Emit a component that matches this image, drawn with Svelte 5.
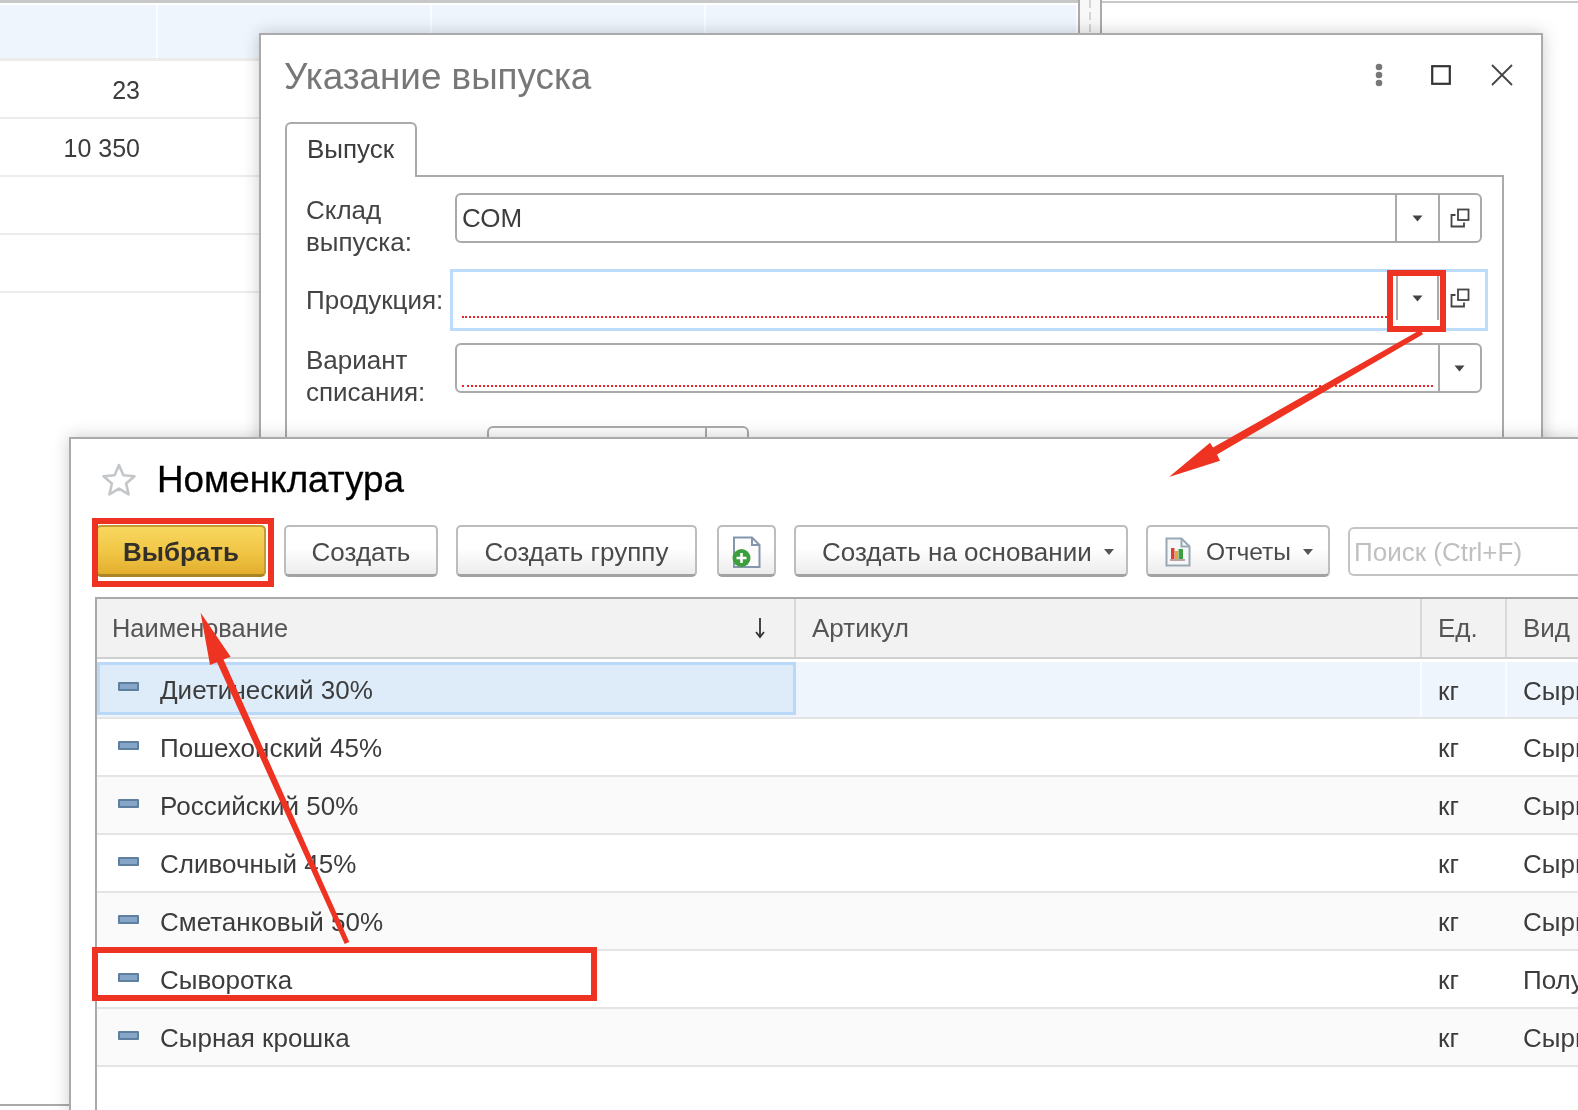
<script>
	const bgRows = ['', '23', '10 350', '', ''];

	const items = [
		{ name: 'Диетический 30%', kind: 'Сырье' },
		{ name: 'Пошехонский 45%', kind: 'Сырье' },
		{ name: 'Российский 50%', kind: 'Сырье' },
		{ name: 'Сливочный 45%', kind: 'Сырье' },
		{ name: 'Сметанковый 50%', kind: 'Сырье' },
		{ name: 'Сыворотка', kind: 'Полуфабрикат' },
		{ name: 'Сырная крошка', kind: 'Сырье' }
	];
</script>

{#snippet caret()}
	<svg class="caret" width="11" height="7" viewBox="0 0 11 7"><path d="M0.500 0.500h10L5.500 6.500z" fill="#444" /></svg>
{/snippet}

{#snippet copy()}
	<svg width="20" height="20" viewBox="0 0 20 20" fill="none" stroke="#444" stroke-width="1.800">
		<rect x="8" y="1.500" width="10.500" height="10.500" />
		<path d="M5.500 7H1.500v11.500h12.500V14.500" />
	</svg>
{/snippet}

<div class="page">
	<div class="bg-left">
		{#each bgRows as val, i}
			<div class="bg-row" class:current={i === 0}>
				<div class="bg-cell num">{val}</div>
				<div class="bg-cell"></div>
				<div class="bg-cell"></div>
				<div class="bg-cell"></div>
			</div>
		{/each}
	</div>
	<div class="splitter"><i></i></div>
	<div class="bg-right"></div>
	<div class="bg-bottom"></div>

	<section class="win dialog">
		<header class="d-head">
			<h2>Указание выпуска</h2>
			<div class="d-tools">
				<svg class="dots" width="12" height="24" viewBox="0 0 12 24"><g fill="#777"><circle cx="6" cy="4" r="3.300" /><circle cx="6" cy="12" r="3.300" /><circle cx="6" cy="20" r="3.300" /></g></svg>
				<svg width="20" height="20" viewBox="0 0 20 20"><rect x="1.200" y="1.200" width="17.600" height="17.600" fill="none" stroke="#333" stroke-width="2.200" /></svg>
				<svg width="22" height="22" viewBox="0 0 22 22"><path d="M1 1l20 20M21 1L1 21" stroke="#444" stroke-width="1.800" fill="none" /></svg>
			</div>
		</header>
		<div class="tabs"><div class="tab">Выпуск</div></div>
		<div class="panel">
			<div class="row">
				<label>Склад<br />выпуска:</label>
				<div class="field">
					<div class="val">СОМ</div>
					<div class="btn">{@render caret()}</div>
					<div class="btn">{@render copy()}</div>
				</div>
			</div>
			<div class="row second">
				<label>Продукция:</label>
				<div class="field focus">
					<div class="val empty"></div>
					<div class="btn sep">{@render caret()}</div>
					<div class="btn plain">{@render copy()}</div>
				</div>
			</div>
			<div class="row third">
				<label>Вариант<br />списания:</label>
				<div class="field">
					<div class="val empty"></div>
					<div class="btn">{@render caret()}</div>
				</div>
			</div>
			<div class="fragment"><div class="frag-btn"></div></div>
		</div>
	</section>

	<section class="win catalog">
		<header class="c-head">
			<svg width="36" height="36" viewBox="0 0 36 36"><path d="M18 3l4.400 10.200 11.100 1-8.400 7.300 2.500 10.900L18 26.600 8.400 32.400l2.500-10.900L2.500 14.200l11.100-1z" fill="none" stroke="#c4c7ca" stroke-width="2.600" stroke-linejoin="round" /></svg>
			<h1>Номенклатура</h1>
		</header>
		<div class="toolbar">
			<button class="primary">Выбрать</button>
			<button class="w-create">Создать</button>
			<button class="w-group">Создать группу</button>
			<button class="w-icon">
				<svg width="32" height="36" viewBox="0 0 32 36">
					<path d="M3 4.500h18l7.500 7.500v22H3z" fill="#fcfcfd" stroke="#8496ab" stroke-width="2" />
					<path d="M21 4.500V12h7.500" fill="none" stroke="#8496ab" stroke-width="2" />
					<circle cx="10.500" cy="25" r="9" fill="#3d9e3d" />
					<path d="M10.500 20v10M5.500 25h10" stroke="#fff" stroke-width="2.600" />
				</svg>
			</button>
			<button class="w-base">Создать на основании<span class="tri"></span></button>
			<button class="w-rep">
				<svg width="26" height="30" viewBox="0 0 26 30">
					<path d="M1.500 1.500h15l8 8v19h-23z" fill="#f4f6f8" stroke="#9aa7b5" stroke-width="2" />
					<path d="M16.500 1.500v8h8" fill="none" stroke="#9aa7b5" stroke-width="2" />
					<rect x="6" y="11" width="3.500" height="11" fill="#d9402e" />
					<rect x="10" y="14" width="3" height="8" fill="#e8a33a" />
					<rect x="13.500" y="12" width="4.500" height="10" fill="#3f9e3f" />
					<path d="M5 23h15" stroke="#a88" stroke-width="1.500" />
				</svg>
				Отчеты<span class="tri"></span>
			</button>
			<div class="search">Поиск (Ctrl+F)</div>
		</div>
		<div class="table">
			<div class="t-row t-head">
				<div class="t-cell name-h">Наименование<span class="sort">
					<svg width="12" height="22" viewBox="0 0 12 22"><path d="M6 1v19M2 15l4 5 4-5" fill="none" stroke="#333" stroke-width="1.800" /></svg>
				</span></div>
				<div class="t-cell">Артикул</div>
				<div class="t-cell">Ед.</div>
				<div class="t-cell">Вид</div>
			</div>
			{#each items as item, i}
				<div class="t-row" class:active={i === 0} class:odd={i % 2 === 0 && i > 0}>
					<div class="t-cell first-col"><span class="dash"></span>{item.name}</div>
					<div class="t-cell"></div>
					<div class="t-cell">кг</div>
					<div class="t-cell">{item.kind}</div>
				</div>
			{/each}
		</div>
	</section>

	<!-- red marks drawn over the screenshot -->
	<div class="mark m-drop"></div>
	<div class="mark m-pick"></div>
	<div class="mark m-row"></div>
	<svg class="arrows" width="1578" height="1110" viewBox="0 0 1578 1110">
		<g fill="#ee3322">
			<path d="M1420.500 329.800L1213 447.500 1210 442.700 1169 477 1220 460.700 1217 454.500 1423 334.200z" />
			<path d="M344.700 944L217 662.300 210 665 200.600 612.700 230.600 656.700 223.500 659.500 349.300 942z" />
		</g>
	</svg>
</div>

<style>
	:global(body) { margin: 0; background: #fff; }

	.page {
		position: relative;
		width: 1578px;
		height: 1110px;
		overflow: hidden;
		background: #fff;
		font-family: "Liberation Sans", Arial, sans-serif;
		font-size: 26px;
		color: #3c3c3c;
		filter: blur(.45px);
	}

	/* table behind the windows */
	.bg-left {
		position: absolute;
		left: 0; top: 0;
		width: 1078px;
		border-top: 3px solid #c8c8c8;
		padding-top: 2px;
	}
	.bg-row {
		display: grid;
		grid-template-columns: 158px 274px 274px 1fr;
		height: 56px;
		border-bottom: 2px solid #ececec;
	}
	.bg-row.current { height: 53px; background: #eef5fd; border-bottom-width: 3px; }
	.bg-cell { padding-right: 18px; line-height: 58px; font-size: 25px; }
	.current .bg-cell { border-right: 2px solid #fafcff; }
	.num { text-align: right; }
	.splitter {
		position: absolute;
		left: 1078px; top: 0;
		width: 20px; height: 34px;
		border: solid #aaa;
		border-width: 0 2px;
		background: #f8f8f8;
	}
	.splitter i {
		display: block;
		width: 2px; height: 34px;
		margin-left: 9px;
		background: repeating-linear-gradient(#d4d4d4 0 8px, transparent 8px 12px);
	}
	.bg-right {
		position: absolute;
		left: 1102px; right: 0; top: 1px;
		border-top: 2px solid #c8c8c8;
	}
	.bg-bottom {
		position: absolute;
		left: 0; top: 1104px;
		width: 70px;
		border-top: 2px solid #aaa;
	}

	/* windows */
	.win {
		position: absolute;
		background: #fff;
		border: 2px solid #aaa;
		box-sizing: border-box;
		box-shadow: 0 0 16px rgba(0, 0, 0, .2);
	}
	.dialog { left: 259px; top: 33px; width: 1284px; height: 430px; }
	.catalog { left: 69px; top: 437px; right: -4px; bottom: -4px; }

	.d-head {
		display: flex;
		align-items: center;
		justify-content: space-between;
		height: 87px;
		padding-left: 23px;
	}
	h2 { margin: 0 0 4px; font-size: 36.800px; font-weight: 400; color: #777; }
	.d-tools { display: flex; align-items: center; gap: 40px; padding-right: 28px; margin-top: -7px; }
	.dots { margin-right: 6px; }

	.tabs { margin-left: 24px; display: flex; }
	.tab {
		width: 132px;
		height: 55px;
		box-sizing: border-box;
		border: 2px solid #aaa;
		border-bottom: 0;
		border-radius: 6px 6px 0 0;
		background: #fff;
		padding-left: 20px;
		line-height: 50px;
		margin-bottom: -2px;
		position: relative;
	}
	.panel {
		margin: 0 37px 0 24px;
		border: 2px solid #aaa;
		border-bottom: 0;
		padding: 16px 20px 0 19px;
		height: 400px;
	}

	.row { display: grid; grid-template-columns: 149px 1fr; align-items: start; line-height: 32px; }
	.row.second { margin-top: 11px; align-items: center; }
	.row.third { margin-top: 12px; }
	label { white-space: nowrap; color: #444; padding-top: 1px; }
	.second label { padding-top: 0; }
	.field {
		display: flex;
		height: 50px;
		box-sizing: border-box;
		border: 2px solid #aaa;
		border-radius: 6px;
	}
	.val { flex: 1; padding-left: 5px; line-height: 46px; }
	.val.empty { margin: 0 5px 4px; padding: 0; border-bottom: 2px dotted #e8262a; }
	.btn {
		box-sizing: border-box;
		width: 42.500px;
		border-left: 2px solid #aaa;
		display: flex;
		align-items: center;
		justify-content: center;
	}
	.field.focus {
		height: 62px;
		margin: 0 -6px 0 -5px;
		border: 3px solid #bddcfb;
		border-radius: 0;
		padding: 4px 5px 8px;
	}
	.field.focus .val.empty { margin-left: 4px; margin-bottom: 2px; }
	.btn.sep { border-right: 2px solid #aaa; width: 43px; }
	.btn.plain { border-left: 0; width: 41px; }
	.fragment {
		margin: 18px 0 0 181px;
		width: 262px;
		height: 40px;
		box-sizing: border-box;
		border: 2px solid #aaa;
		border-radius: 6px;
		display: flex;
		justify-content: flex-end;
	}
	.frag-btn { width: 40px; border-left: 2px solid #aaa; }

	.c-head { display: flex; align-items: center; height: 86px; padding: 0 0 5px 30px; box-sizing: border-box; gap: 20px; }
	h1 { margin: 0; font-size: 36.800px; font-weight: 400; color: #000; -webkit-text-stroke: .3px #000; }

	.toolbar { display: flex; gap: 18px; margin-left: 25px; height: 52px; align-items: stretch; }
	button {
		font: inherit;
		color: #4a4a4a;
		height: 52px;
		box-sizing: border-box;
		border: 2px solid #bdbdbd;
		border-bottom: 3px solid #a2a2a2;
		border-radius: 5px;
		background: linear-gradient(#fff, #fff 45%, #ececec);
		padding: 3px 0 0;
		display: flex;
		align-items: center;
		justify-content: center;
		white-space: nowrap;
	}
	.primary {
		width: 170px;
		background: linear-gradient(#f8d85f, #f0c545 55%, #e3ae2e);
		border-color: #c09a33;
		border-bottom-color: #a98526;
		color: #33302a;
		font-weight: 700;
	}
	.w-create { width: 154px; }
	.w-group { width: 241px; }
	.w-icon { width: 59px; margin-left: 2px; padding-top: 0; }
	.w-base { width: 334px; justify-content: flex-start; padding-left: 26px; }
	.w-rep { width: 184px; gap: 15px; justify-content: flex-start; padding-left: 17px; font-size: 24.600px; }
	.tri {
		display: inline-block;
		margin-left: 12px;
		border: 5px solid transparent;
		border-top: 6px solid #555;
		border-bottom: 0;
	}
	.w-rep .tri { margin-left: -3px; }
	.search {
		flex: 1;
		margin: 2px 0 0;
		height: 49px;
		box-sizing: border-box;
		border: 2px solid #c4c4c4;
		border-radius: 6px 0 0 6px;
		padding-left: 4px;
		line-height: 46px;
		color: #c0c0c0;
	}

	.table {
		margin: 20px 0 0 24px;
		border-left: 2px solid #aaa;
		border-top: 2px solid #aaa;
		height: 520px;
	}
	.t-row {
		display: grid;
		grid-template-columns: 699px 626px 85px 1fr;
		height: 58px;
		box-sizing: border-box;
		border-bottom: 2px solid #e4e4e4;
		align-items: stretch;
	}
	.t-cell {
		box-sizing: border-box;
		padding-left: 16px;
		line-height: 58px;
		white-space: nowrap;
		overflow: hidden;
	}
	.t-head {
		height: 63px;
		border-bottom: 3px solid #fff;
		background: #f2f2f2;
		box-shadow: inset 0 -2px 0 #cfcfcf;
		color: #555;
	}
	.t-head .t-cell { border-right: 2px solid #d8d8d8; height: 58px; line-height: 58px; }
	.name-h { display: flex; justify-content: space-between; font-size: 25.400px; padding-left: 15px; }
	.sort { padding-right: 28px; display: flex; align-items: center; }
	.t-row.odd { background: #fafafa; }
	.t-row.active { background: #eef5fd; height: 57px; }
	.t-row.active .t-cell { border-right: 2px solid #fafcff; line-height: 54px; }
	.t-row.active .first-col {
		background: #deecfa;
		box-shadow: inset 0 0 0 3px #bad9f8;
		height: 53px;
		border-right: 0;
	}
	.t-row.active .t-cell:nth-child(n+3) { line-height: 58px; }
	.first-col { padding: 2px 0 0 21px; display: flex; align-items: center; }
	.dash {
		width: 17px;
		height: 5px;
		margin: -6px 21px 0 0;
		background: #86a6c9;
		border: 2px solid #5f7f9f;
		border-radius: 1px;
		flex: none;
	}

	/* annotations */
	.mark { position: absolute; box-sizing: border-box; border: 6px solid #ee3322; }
	.m-drop { left: 1387px; top: 270px; width: 59px; height: 62px; }
	.m-pick { left: 92px; top: 518px; width: 182px; height: 69px; }
	.m-row { left: 92px; top: 947px; width: 505px; height: 54px; }
	.arrows { position: absolute; left: 0; top: 0; pointer-events: none; }
</style>
